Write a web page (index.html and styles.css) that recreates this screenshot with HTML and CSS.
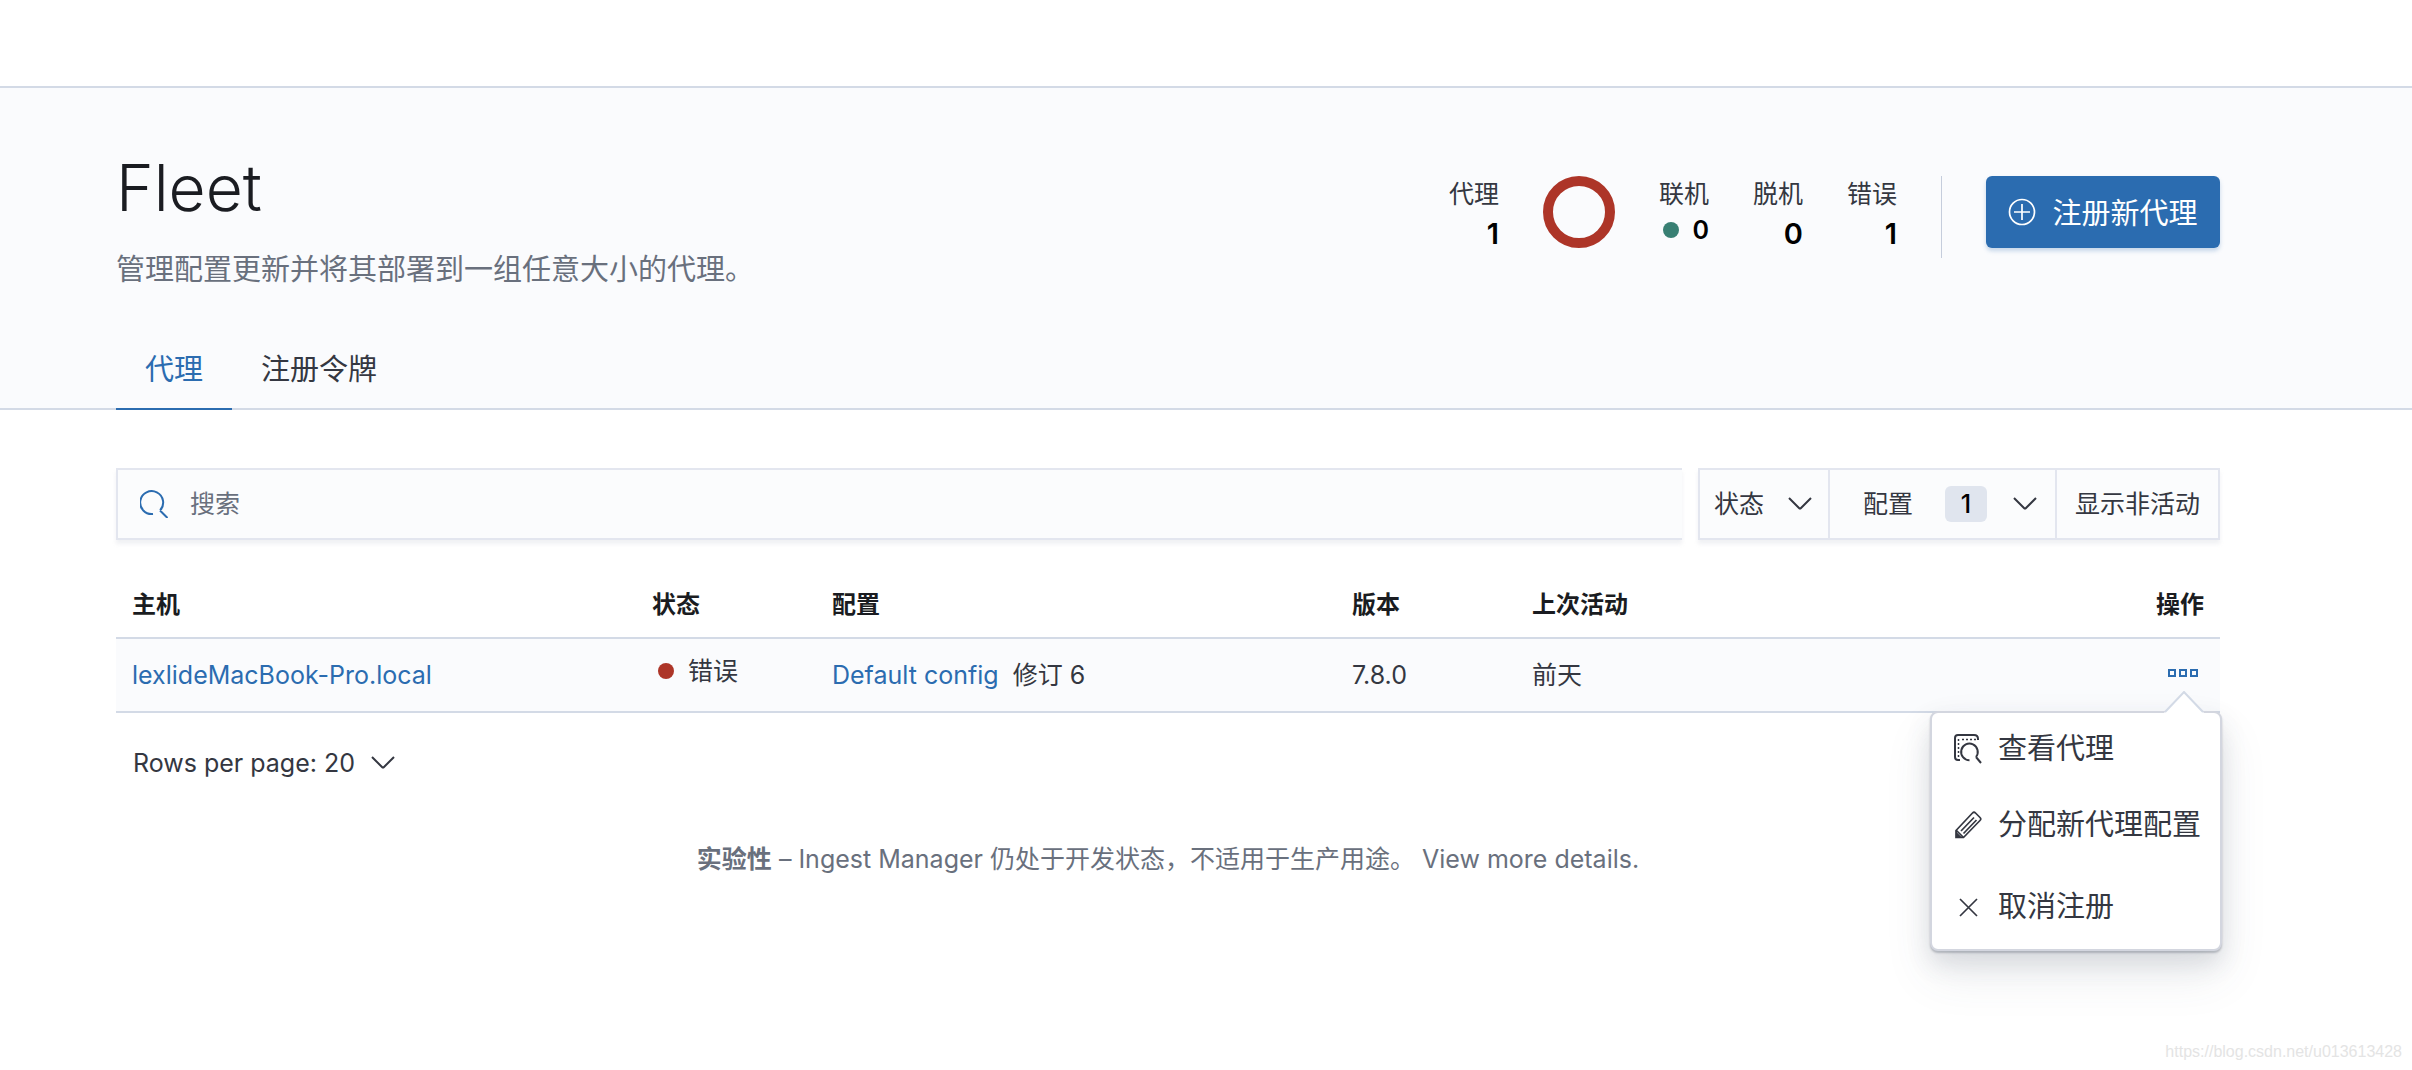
FILE: index.html
```html
<!DOCTYPE html>
<html lang="zh-CN">
<head>
<meta charset="utf-8">
<title>Fleet</title>
<meta name="viewport" content="width=device-width, initial-scale=1">
<link rel="stylesheet" href="styles.css">
</head>
<body>
<div class="topbar"></div>
<header class="header">
  <div class="header-main">
    <div class="intro">
      <h1 class="title">Fleet</h1>
      <p class="subtitle">管理配置更新并将其部署到一组任意大小的代理。</p>
    </div>
    <div class="summary">
      <dl class="stat"><dt>代理</dt><dd>1</dd></dl>
      <svg class="donut" viewBox="0 0 72 72" aria-hidden="true"><circle cx="36" cy="36" r="31" fill="none" stroke="#ad3528" stroke-width="10"/></svg>
      <dl class="stat"><dt>联机</dt><dd class="online"><span class="dot dot-green"></span>0</dd></dl>
      <dl class="stat"><dt>脱机</dt><dd>0</dd></dl>
      <dl class="stat"><dt>错误</dt><dd>1</dd></dl>
      <div class="divider"></div>
      <button class="primary" type="button">
        <svg class="icon-plus" viewBox="0 0 28 28" aria-hidden="true"><circle cx="14" cy="14" r="12.500"/><path d="M14 6v16M6 14h16"/></svg>
        <span>注册新代理</span>
      </button>
    </div>
  </div>
  <nav class="tabs">
    <a class="tab tab-active" href="#agents">代理</a>
    <a class="tab" href="#tokens">注册令牌</a>
  </nav>
</header>
<main class="content">
  <div class="toolbar">
    <label class="search">
      <svg class="icon-search" viewBox="0 0 28 28" aria-hidden="true"><path d="M13 24A11.500 11.500 0 1 1 20 20.500M20 20.500L27.500 28"/></svg>
      <input type="search" placeholder="搜索" aria-label="搜索">
    </label>
    <div class="filters">
      <button class="filter filter-status" type="button"><span>状态</span><svg class="chevron" viewBox="0 0 24 14" aria-hidden="true"><path d="M1 1l10 10q1 1 2 0L23 1"/></svg></button>
      <button class="filter filter-config" type="button"><span>配置</span><span class="badge">1</span><svg class="chevron" viewBox="0 0 24 14" aria-hidden="true"><path d="M1 1l10 10q1 1 2 0L23 1"/></svg></button>
      <button class="filter filter-inactive" type="button">显示非活动</button>
    </div>
  </div>
  <table class="agents">
    <colgroup><col class="col-wide"><col class="col-narrow"><col class="col-wide"><col class="col-narrow"><col><col class="col-actions"></colgroup>
    <thead>
      <tr><th>主机</th><th>状态</th><th>配置</th><th>版本</th><th>上次活动</th><th class="actions">操作</th></tr>
    </thead>
    <tbody>
      <tr>
        <td><a href="#agent">lexlideMacBook-Pro.local</a></td>
        <td><span class="health"><span class="dot dot-red"></span>错误</span></td>
        <td><span class="config"><a href="#config">Default config</a><span>修订 6</span></span></td>
        <td>7.8.0</td>
        <td>前天</td>
        <td class="actions">
          <div class="menu-anchor">
            <button class="more" type="button" aria-label="操作"><svg viewBox="0 0 30 8" aria-hidden="true"><path d="M1 1h6v6H1zM12 1h6v6h-6zM23 1h6v6h-6z"/></svg></button>
            <div class="menu">
              <svg class="menu-arrow" viewBox="0 0 40 22" aria-hidden="true"><path class="arrow-fill" d="M0 22L20 1l20 21z"/><path class="arrow-line" d="M1 21L20 1l19 20"/></svg>
              <button class="item item-view" type="button">
                <svg viewBox="0 0 28 30" aria-hidden="true"><path d="M6 26H4q-3 0-3-3V4q0-3 3-3h16q4 0 4 4v1M15.500 26.200a8.300 8.300 0 1 1 6.500-3.200M22 23L27 29"/><path class="dots" stroke-width="1.500" d="M8 5.500h14M4.500 5v19"/></svg>
                <span>查看代理</span>
              </button>
              <button class="item item-assign" type="button">
                <svg viewBox="0 0 28 30" aria-hidden="true"><path class="fine" d="M2 20.500L18.500 3q1.500-1.500 3 0l4.500 4.500q1.500 1.500 0 3L9.500 27.500H2zM7 21L20 7.500M9.500 23.500L22.500 10M2.500 20.500l7 7"/><path class="tip" d="M2 21.500L8.500 28H2z"/></svg>
                <span>分配新代理配置</span>
              </button>
              <button class="item item-remove" type="button">
                <svg viewBox="0 0 28 30" aria-hidden="true"><path class="fine" d="M6 7l17 17M23 7L6 24"/></svg>
                <span>取消注册</span>
              </button>
            </div>
          </div>
        </td>
      </tr>
    </tbody>
  </table>
  <button class="page-size" type="button"><span>Rows per page: 20</span><svg class="chevron" viewBox="0 0 24 14" aria-hidden="true"><path d="M1 1l10 10q1 1 2 0L23 1"/></svg></button>
  <p class="notice"><strong>实验性</strong> – Ingest Manager 仍处于开发状态，不适用于生产用途。 <a href="#details">View more details.</a></p>
</main>
<footer class="watermark">https://blog.csdn.net/u013613428</footer>
</body>
</html>
```
FILE: styles.css
```css
* { box-sizing: border-box; }

body {
  margin: 0;
  min-height: 100vh;
  display: flex;
  flex-direction: column;
  background: #fff;
  color: #343741;
  font: 25px/36px Inter, "Noto Sans CJK SC", sans-serif;
}

a { color: #2b6cb0; text-decoration: none; }

button {
  border: 0;
  padding: 0;
  background: none;
  color: inherit;
  font: inherit;
  cursor: pointer;
}

svg { fill: none; stroke: currentColor; stroke-width: 2; flex: none; }
.fine { stroke-width: 1.7; }

.topbar { height: 86px; }

.header {
  padding: 0 192px 0 116px;
  border-top: 2px solid #d3dae6;
  border-bottom: 2px solid #d3dae6;
  background: #fafbfd;
}

.header-main {
  display: flex;
  justify-content: space-between;
  padding-top: 60px;
}

.title {
  margin: 0;
  color: #1a1c21;
  font-size: 64px;
  font-weight: 300;
  line-height: 80px;
}

.subtitle {
  margin: 22px 0 0;
  color: #69707d;
  font-size: 29px;
  line-height: 40px;
}

.summary {
  display: flex;
  align-items: flex-start;
  gap: 44px;
  padding-top: 28px;
}

.stat { margin: 0; width: 50px; text-align: right; }
.stat dd {
  margin: 4px 0 0;
  color: #000;
  font-size: 29px;
  font-weight: 600;
}
.stat .online {
  display: flex;
  justify-content: space-between;
  align-items: center;
  margin-top: 0;
  padding-left: 4px;
  font-size: 25px;
}

.dot { width: 16px; height: 16px; border-radius: 50%; flex: none; }
.dot-green { background: #387f73; }
.dot-red { background: #ad3528; }

.donut { width: 72px; height: 72px; }

.divider { width: 1px; height: 82px; background: #c5cddc; }

.primary {
  display: flex;
  align-items: center;
  justify-content: center;
  gap: 16px;
  width: 234px;
  height: 72px;
  border-radius: 6px;
  background: #2b6cb0;
  box-shadow: 0 3px 4px rgba(43, 108, 176, 0.25);
  color: #fff;
  font-size: 29px;
}
.primary span { padding-top: 4px; }
.icon-plus { width: 28px; height: 28px; stroke-width: 1.7; }

.tabs { display: flex; margin-top: 38px; margin-bottom: -2px; }
.tab {
  padding: 22px 29px 18px;
  border-bottom: 2px solid transparent;
  color: #343741;
  font-size: 29px;
  line-height: 40px;
}
.tab-active { border-color: #2b6cb0; color: #2b6cb0; }

.content { flex: 1; padding: 58px 192px 0 116px; }

.toolbar { display: flex; gap: 16px; }

.search {
  flex: 1;
  display: flex;
  align-items: center;
  gap: 22px;
  height: 72px;
  padding-left: 22px;
  border: 2px solid #e3e6ef;
  border-right: 0;
  background: #fbfcfd;
  box-shadow: 0 4px 4px rgba(152, 162, 179, 0.15);
}
.search input {
  flex: 1;
  min-width: 0;
  height: 100%;
  padding: 0;
  border: 0;
  outline: 0;
  background: none;
  color: #343741;
  font: inherit;
}
.search input::placeholder { color: #69707d; opacity: 1; }
.icon-search { width: 28px; height: 28px; color: #2b6cb0; }

.filters {
  display: flex;
  height: 72px;
  border: 2px solid #e3e6ef;
  background: #fbfcfd;
  box-shadow: 0 4px 4px rgba(152, 162, 179, 0.15);
}
.filter {
  display: flex;
  align-items: center;
  justify-content: space-between;
}
.filter + .filter { border-left: 2px solid #e3e6ef; }
.filter-status { width: 128px; padding: 0 16px 0 14px; }
.filter-config { width: 227px; padding: 0 18px 0 33px; }
.filter-inactive { width: 163px; justify-content: center; }

.badge {
  width: 42px;
  margin-left: 6px;
  border-radius: 6px;
  background: #e0e5ee;
  color: #000;
  font-weight: 500;
}

.chevron { width: 24px; height: 14px; }

.agents {
  width: 100%;
  margin-top: 32px;
  border-collapse: collapse;
  table-layout: fixed;
}
.col-wide { width: 520px; }
.col-narrow { width: 180px; }
.col-actions { width: 200px; }
.agents th, .agents td {
  padding: 0 16px;
  border-bottom: 2px solid #d3dae6;
  text-align: left;
}
.agents th {
  height: 66px;
  color: #1a1c21;
  font-size: 24px;
  font-weight: 700;
}
.agents td { height: 74px; background: #fafbfd; }
.agents .actions { text-align: right; }

.health {
  display: flex;
  align-items: center;
  gap: 14px;
  padding: 0 0 8px 6px;
}
.config { display: flex; gap: 14px; }

.menu-anchor { position: relative; display: flex; justify-content: flex-end; }
.more { display: flex; padding: 0 6px 4px 0; color: #2b6cb0; }
.more svg { width: 30px; height: 8px; }

.menu {
  position: absolute;
  top: 42px;
  right: -18px;
  width: 292px;
  border: 2px solid #d3d6df;
  border-radius: 8px;
  background: #fff;
  box-shadow: 0 2px 2px rgba(105, 112, 125, 0.4), 0 12px 24px rgba(65, 78, 101, 0.15), 0 24px 48px rgba(65, 78, 101, 0.1);
}
.menu-arrow {
  position: absolute;
  top: -22px;
  right: 16px;
  width: 40px;
  height: 22px;
}
.arrow-fill { fill: #fff; stroke: none; }
.arrow-line { stroke: #d3dae6; }

.item {
  display: flex;
  align-items: center;
  gap: 16px;
  width: 100%;
  padding-left: 22px;
  font-size: 29px;
  white-space: nowrap;
}
.item svg { width: 28px; height: 30px; }
.item-view { height: 72px; }
.item-assign { height: 80px; }
.item-remove { height: 84px; }
.dots { stroke-dasharray: 2 2; }
.tip { fill: currentColor; stroke: none; }

.page-size {
  display: flex;
  align-items: center;
  gap: 16px;
  margin: 32px 0 0 17px;
}

.notice { margin: 60px 0 0; color: #69707d; text-align: center; }
.notice a { color: inherit; }

.watermark {
  padding: 0 10px 6px;
  color: #e4e4e4;
  font: 16px/24px "Liberation Sans", sans-serif;
  text-align: right;
}
```
